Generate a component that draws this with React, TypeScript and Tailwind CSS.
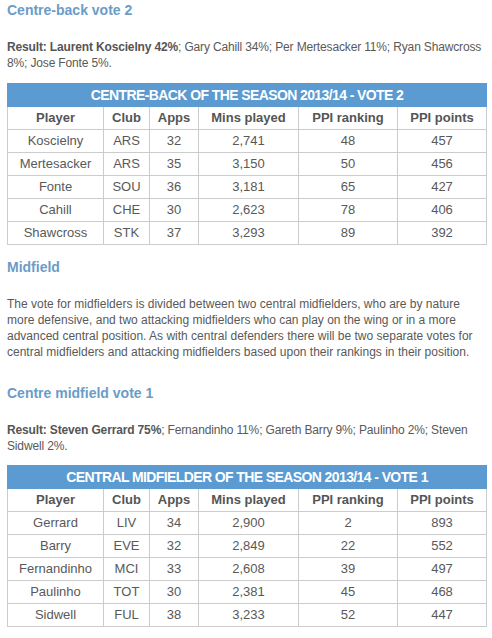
type Row = [string, string, number, string, number, number]

const centreBacks: Row[] = [
  ['Koscielny', 'ARS', 32, '2,741', 48, 457],
  ['Mertesacker', 'ARS', 35, '3,150', 50, 456],
  ['Fonte', 'SOU', 36, '3,181', 65, 427],
  ['Cahill', 'CHE', 30, '2,623', 78, 406],
  ['Shawcross', 'STK', 37, '3,293', 89, 392],
]

const centreMids: Row[] = [
  ['Gerrard', 'LIV', 34, '2,900', 2, 893],
  ['Barry', 'EVE', 32, '2,849', 22, 552],
  ['Fernandinho', 'MCI', 33, '2,608', 39, 497],
  ['Paulinho', 'TOT', 30, '2,381', 45, 468],
  ['Sidwell', 'FUL', 38, '3,233', 52, 447],
]

const HEADERS = ['Player', 'Club', 'Apps', 'Mins played', 'PPI ranking', 'PPI points']
const COL_WIDTHS = ['w-[96px]', 'w-[46px]', 'w-[49px]', 'w-[100px]', 'w-[99px]', 'w-[89px]']

function Heading({ children, className = '' }: { children: React.ReactNode; className?: string }) {
  return (
    <h2 className={`text-[14px] leading-[16px] font-bold text-[#6b9cc8] ${className}`}>
      {children}
    </h2>
  )
}

/** PPI stats table — blue title bar, then header row and five player rows */
function StatsTable({ title, rows, className = '' }: { title: string; rows: Row[]; className?: string }) {
  return (
    <table className={`w-[479px] table-fixed border-collapse ${className}`}>
      <colgroup>
        {COL_WIDTHS.map((w, i) => (
          <col key={i} className={w} />
        ))}
      </colgroup>
      <thead>
        <tr>
          <th
            colSpan={6}
            className="h-[23px] p-0 bg-[#5b9bd1] border border-[#5b9bd1] text-white text-[14px] font-bold leading-[22px] text-center tracking-[-0.6px] whitespace-nowrap"
          >
            {title}
          </th>
        </tr>
        <tr>
          {HEADERS.map((h) => (
            <th
              key={h}
              className="h-[23px] p-0 border border-[#cccccc] text-[13px] font-bold text-[#555555] text-center leading-[22px]"
            >
              {h}
            </th>
          ))}
        </tr>
      </thead>
      <tbody>
        {rows.map((r) => (
          <tr key={r[0]}>
            {r.map((cell, i) => (
              <td
                key={i}
                className="h-[23px] p-0 border border-[#cccccc] text-[13px] text-[#595959] text-center leading-[22px]"
              >
                {cell}
              </td>
            ))}
          </tr>
        ))}
      </tbody>
    </table>
  )
}

export default function App() {
  return (
    <div className="w-[492px] h-[638px] overflow-hidden bg-white px-[7px] pt-[2px] [font-family:'Liberation_Sans',Arial,sans-serif]">
      <Heading>Centre-back vote 2</Heading>

      <p className="mt-[21px] -mr-[4px] text-[12px] leading-[16px] text-[#595959] tracking-[-0.15px]">
        <b className="text-[#555555]">Result: Laurent Koscielny 42%</b>; Gary Cahill 34%; Per Mertesacker 11%; Ryan
        Shawcross 8%; Jose Fonte 5%.
      </p>

      <StatsTable className="mt-[12px]" title="CENTRE-BACK OF THE SEASON 2013/14 - VOTE 2" rows={centreBacks} />

      <Heading className="mt-[14px]">Midfield</Heading>

      <p className="mt-[21px] text-[12px] leading-[16px] text-[#595959] pr-[2px]">
        The vote for midfielders is divided between two central midfielders, who are by nature more defensive,
        and two attacking midfielders who can play on the wing or in a more advanced central position. As with
        central defenders there will be two separate votes for central midfielders and attacking midfielders
        based upon their rankings in their position.
      </p>

      <Heading className="mt-[25px]">Centre midfield vote 1</Heading>

      <p className="mt-[21px] text-[12px] leading-[16px] text-[#595959] tracking-[-0.15px]">
        <b className="text-[#555555]">Result: Steven Gerrard 75%</b>; Fernandinho 11%; Gareth Barry 9%; Paulinho 2%;
        Steven Sidwell 2%.
      </p>

      <StatsTable className="mt-[11px]" title="CENTRAL MIDFIELDER OF THE SEASON 2013/14 - VOTE 1" rows={centreMids} />
    </div>
  )
}
